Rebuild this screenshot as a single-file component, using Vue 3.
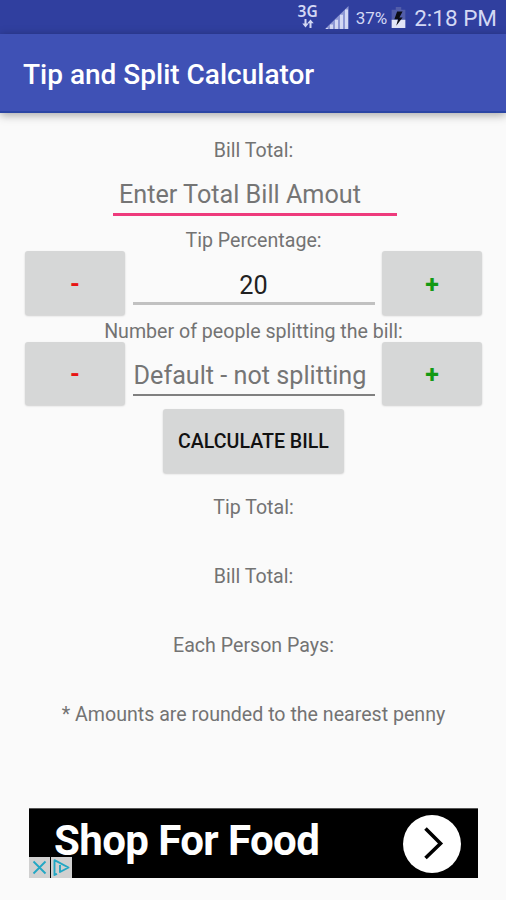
<template>
    <div class="screen">
        <div class="status-bar">
            <div class="network">
                <span>3G</span>
                <svg width="12" height="9" viewBox="0 0 12 9">
                    <path d="M3.5 0v5.2M8.5 9V3.6" stroke="#d3d8f4" stroke-width="2" fill="none" />
                    <path d="M.3 4.6h6.4L3.5 8.4zM5.3 4.2h6.4L8.5.4z" fill="#d3d8f4" />
                </svg>
            </div>
            <svg class="signal" width="24" height="23" viewBox="0 0 24 23">
                <path d="M0 23L23.5 0V23z" fill="#8d97d4" />
                <path d="M1 22h2v1H1zM5 18.6h3V23H5zM10 13.7h3V23h-3zM15 8.8h3V23h-3zM20 3.5h3V23h-3z" fill="#d3d8f4" />
            </svg>
            <span class="percent">37%</span>
            <svg class="battery" width="15" height="21" viewBox="0 0 15 23">
                <path d="M4.5 0h6v3H15v12H0V3h4.5z" fill="#525da9" />
                <path d="M0 14h15v9H0z" fill="#e3e6f8" />
                <path d="M6 5L3 13.5h4L5 20.5l7-9H8.500L12 5z" fill="#0b0c14" />
            </svg>
            <span class="clock">2:18 PM</span>
        </div>

        <header class="app-bar">
            <h1>Tip and Split Calculator</h1>
        </header>

        <main class="content">
            <label class="label">Bill Total:</label>
            <input v-model="bill" class="field bill-field" type="text" placeholder="Enter Total Bill Amout">

            <label class="label tip-label">Tip Percentage:</label>
            <div class="stepper">
                <button class="btn minus" @click="changeTip(-1)">-</button>
                <input v-model="tip" class="field tip-field" type="text">
                <button class="btn plus" @click="changeTip(1)">+</button>
            </div>

            <label class="label people-label">Number of people splitting the bill:</label>
            <div class="stepper">
                <button class="btn minus" @click="changePeople(-1)">-</button>
                <input v-model="people" class="field people-field" type="text" placeholder="Default - not splitting">
                <button class="btn plus" @click="changePeople(1)">+</button>
            </div>

            <button class="btn calculate" @click="calculate">CALCULATE BILL</button>

            <div class="results">
                <p v-for="row in results" :key="row.key">{{ row.label }} {{ totals[row.key] }}</p>
                <p class="note">* Amounts are rounded to the nearest penny</p>
            </div>
        </main>

        <div class="ad">
            <span class="ad-text">Shop For Food</span>
            <div class="ad-arrow">
                <svg width="58" height="58" viewBox="0 0 58 58">
                    <path d="M22.500 13.500L37.500 28.500L22.500 43" fill="none" stroke="#000" stroke-width="3.600" />
                </svg>
            </div>
            <div class="ad-badges">
                <span class="badge">
                    <svg width="21" height="21" viewBox="0 0 21 21">
                        <path d="M4.500 4.500l12 12M16.500 4.500l-12 12" stroke="#22a7c4" stroke-width="1.800" />
                    </svg>
                </span>
                <span class="badge">
                    <svg width="21" height="21" viewBox="0 0 21 21">
                        <path d="M6 16.800l-2.500 1.200V3.200L17.500 10.500L9 15V8" fill="none" stroke="#22a7c4" stroke-width="1.900" stroke-linejoin="round" />
                    </svg>
                </span>
            </div>
        </div>
    </div>
</template>

<script setup>
import { ref } from 'vue';

const bill = ref('');
const tip = ref('20');
const people = ref('');
const totals = ref({ tip: '', bill: '', each: '' });

const results = [
    { key: 'tip', label: 'Tip Total:' },
    { key: 'bill', label: 'Bill Total:' },
    { key: 'each', label: 'Each Person Pays:' }
];

function changeTip(step) {
    tip.value = String(Math.max(0, (Number(tip.value) || 0) + step));
}

function changePeople(step) {
    people.value = String(Math.max(1, (Number(people.value) || 1) + step));
}

function calculate() {
    const amount = Number(bill.value) || 0;
    const tipTotal = amount * (Number(tip.value) || 0) / 100;
    const total = amount + tipTotal;
    totals.value = {
        tip: '$' + tipTotal.toFixed(2),
        bill: '$' + total.toFixed(2),
        each: '$' + (total / (Number(people.value) || 1)).toFixed(2)
    };
}
</script>

<style>
body {
    margin: 0;
    background: #fafafa;
}
</style>

<style scoped>
.screen {
    width: 506px;
    height: 900px;
    display: flex;
    flex-direction: column;
    overflow: hidden;
    background: #fafafa;
    font-family: Roboto, "Liberation Sans", sans-serif;
    color: #737373;
}

/* status bar */
.status-bar {
    height: 34px;
    flex: none;
    box-sizing: border-box;
    display: flex;
    align-items: center;
    justify-content: flex-end;
    padding: 1px 9px 0 0;
    background: #303f9f;
    color: #d3d8f4;
}
.network {
    display: flex;
    flex-direction: column;
    align-items: center;
    width: 20px;
    padding-bottom: 4px;
    font-family: "Noto Sans", sans-serif;
    font-size: 15.5px;
    font-weight: 600;
    line-height: 15px;
}
.signal {
    margin-left: 7px;
}
.percent {
    margin-left: 7px;
    font-size: 17px;
}
.battery {
    margin-left: 4px;
}
.clock {
    margin-left: 8px;
    font-size: 22.5px;
}

/* toolbar */
.app-bar {
    height: 79px;
    flex: none;
    box-sizing: border-box;
    display: flex;
    align-items: center;
    padding: 4px 23px 0;
    background: #3f51b5;
    border-bottom: 2px solid #2b45a4;
    box-shadow: 0 2px 9px rgba(0, 0, 0, 0.35);
}
h1 {
    margin: 0;
    color: #fff;
    font-size: 28px;
    font-weight: 500;
    white-space: nowrap;
}

/* form */
.content {
    flex: 1;
    display: flex;
    flex-direction: column;
    align-items: center;
    padding: 25px 24px 0 25px;
}
.label {
    height: 23px;
    line-height: 25px;
    font-size: 19.6px;
    white-space: nowrap;
}
.field {
    box-sizing: border-box;
    border: 0;
    border-radius: 0;
    padding: 0;
    outline: none;
    background: transparent;
    font-family: inherit;
    font-size: 25.2px;
    color: #212121;
}
.field::placeholder {
    color: #757575;
    opacity: 1;
}
.bill-field {
    width: 284px;
    height: 55px;
    margin-left: 3px;
    padding: 14px 6px 0;
    border-bottom: 3px solid #ee3b7c;
}
.tip-label {
    margin-top: 12px;
}
.people-label {
    margin-top: 4px;
}
.stepper {
    width: 100%;
    height: 64px;
    display: flex;
    justify-content: space-between;
}
.people-label + .stepper {
    height: 63px;
}
.btn {
    border: 0;
    border-radius: 3px;
    padding: 2px 0 0;
    background: #d6d7d7;
    box-shadow: 0 1px 2px rgba(0, 0, 0, 0.18);
    font-family: inherit;
    color: #111;
}
.minus,
.plus {
    width: 100px;
    font-size: 25px;
    font-weight: 700;
}
.minus {
    color: #e81414;
}
.plus {
    color: #139a13;
}
.tip-field,
.people-field {
    width: 242px;
    height: 54px;
}
.tip-field {
    padding-top: 17px;
    border-bottom: 3px solid #c1c1c1;
    text-align: center;
}
.people-field {
    padding: 15px 0 0 1px;
    border-bottom: 2px solid #808080;
}
.calculate {
    width: 181px;
    height: 64px;
    margin-top: 4px;
    padding-top: 0;
    font-size: 19.6px;
    font-weight: 500;
}
.results {
    margin-top: 23px;
    text-align: center;
    font-size: 19.6px;
}
.results p {
    height: 69px;
    margin: 0;
    line-height: 24px;
}

/* banner */
.ad {
    position: relative;
    flex: none;
    height: 70px;
    box-sizing: border-box;
    margin: 0 28px 22px 29px;
    padding: 0 17px 0 25px;
    display: flex;
    align-items: center;
    justify-content: space-between;
    background: #000;
    border-top: 1px solid #555;
}
.ad-text {
    padding-bottom: 6px;
    color: #fff;
    font-size: 42px;
    font-weight: 700;
    letter-spacing: -0.6px;
    white-space: nowrap;
}
.ad-arrow {
    width: 58px;
    height: 58px;
    border-radius: 50%;
    background: #fff;
}
.ad-badges {
    position: absolute;
    left: 0;
    bottom: 0;
    display: flex;
    gap: 1px;
}
.badge {
    width: 21px;
    height: 21px;
    display: flex;
    background: #d0d0d0;
}
</style>
